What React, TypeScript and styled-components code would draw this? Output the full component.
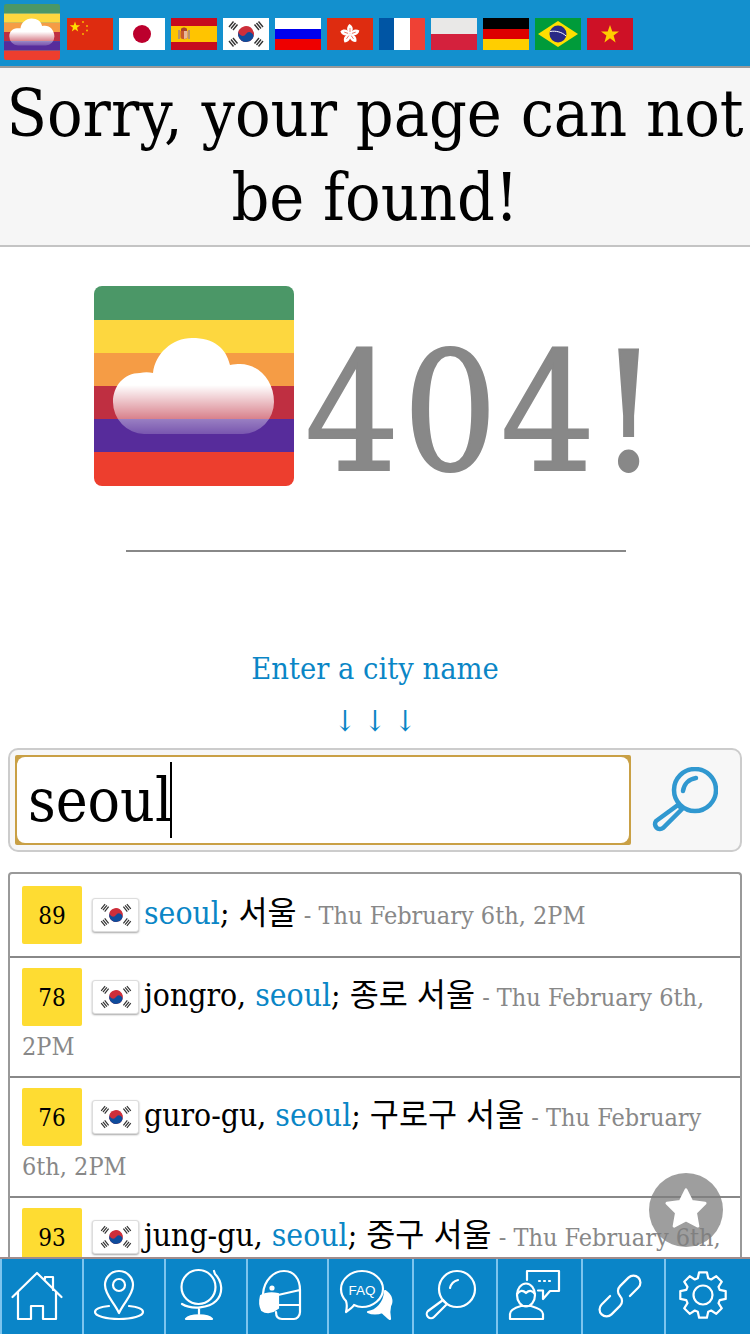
import React from 'react'
import styled, { createGlobalStyle } from 'styled-components'

const SERIF = '"DejaVu Serif Condensed", "DejaVu Serif", "Noto Sans CJK KR", serif'

const GlobalStyle = createGlobalStyle`
    html, body {
        margin: 0;
        padding: 0;
        background: #fff;
    }
    * {
        box-sizing: border-box;
    }
`

// @ Logo: six stripes and the cloud
const Logo = ({ size, id }: { size: number; id: string }) => (
    <svg width={size} height={size} viewBox="0 0 200 200" style={{ display: 'block' }}>
        <defs>
            <linearGradient id={id} x1="0" y1="0" x2="0" y2="1">
                <stop offset="0.49" stopColor="#fff" />
                <stop offset="0.84" stopColor="#fff" stopOpacity="0.4" />
                <stop offset="1" stopColor="#fff" stopOpacity="0.2" />
            </linearGradient>
            <clipPath id={`${id}-clip`}>
                <rect width="200" height="200" rx="8" />
            </clipPath>
        </defs>
        <g clipPath={`url(#${id}-clip)`}>
            <rect y="0" width="200" height="34" fill="#4b9767" />
            <rect y="34" width="200" height="33" fill="#fdd73f" />
            <rect y="67" width="200" height="33" fill="#f59c45" />
            <rect y="100" width="200" height="33" fill="#bf2f41" />
            <rect y="133" width="200" height="33" fill="#572c9b" />
            <rect y="166" width="200" height="34" fill="#ed3e2e" />
        </g>
        <path
            d="M50 148 A32 32 0 0 1 19 116 C19 100 30 87 46 87 C50 86 55 86 59 87 C61 68 78 52 98 52 C120 52 132 62 136 79 C140 78 143 78 146 78 C165 78 180 95 180 116 A32 32 0 0 1 149 148 Z"
            fill={`url(#${id})`}
        />
    </svg>
)

const FlagCn = () => (
    <svg viewBox="0 0 46 32">
        <rect width="46" height="32" fill="#de2c10" />
        <polygon points="8,3.500 9.300,7.300 13.200,7.300 10,9.700 11.200,13.500 8,11.200 4.800,13.500 6,9.700 2.800,7.300 6.700,7.300" fill="#ffde00" />
        <circle cx="16" cy="4" r="1" fill="#f8b400" />
        <circle cx="20" cy="8" r="1" fill="#f8b400" />
        <circle cx="20" cy="12.500" r="1" fill="#f8b400" />
        <circle cx="16" cy="16" r="1" fill="#f8b400" />
    </svg>
)

const FlagJp = () => (
    <svg viewBox="0 0 46 32">
        <rect width="46" height="32" fill="#fff" />
        <circle cx="23" cy="16" r="9" fill="#bc002d" />
    </svg>
)

const FlagEs = () => (
    <svg viewBox="0 0 46 32">
        <rect width="46" height="32" fill="#c60b1e" />
        <rect y="8" width="46" height="16" fill="#ffc400" />
        <rect x="7" y="12" width="2" height="9" fill="#b8936b" />
        <rect x="17" y="12" width="2" height="9" fill="#b8936b" />
        <path d="M9.500 13 H16.500 V19 C16.500 22 9.500 22 9.500 19 Z" fill="#c8582e" />
        <path d="M13 13 H16.500 V19 C16.500 20 15 21 13 21 Z" fill="#e8b89a" />
        <path d="M10 11 C11 9 15 9 16 11 V13 H10 Z" fill="#a8432a" />
    </svg>
)

const FlagKr = () => (
    <svg viewBox="0 0 46 32">
        <rect width="46" height="32" fill="#fff" />
        <g transform="translate(23 16) rotate(34)">
            <circle r="8" fill="#cd2e3a" />
            <path d="M-8 0 A8 8 0 0 0 8 0 A4 4 0 0 0 0 0 A4 4 0 0 1 -8 0 Z" fill="#0f4c9c" />
        </g>
        <g stroke="#333" strokeWidth="1.400">
            <path d="M6 9 L10.500 3.500 M8 10.500 L12.500 5 M10 12 L14.500 6.500" />
            <path d="M31.500 6.500 L36 12 M33.500 5 L38 10.500 M35.500 3.500 L40 9" />
            <path d="M6 23 L10.500 28.500 M8 21.500 L12.500 27 M10 20 L14.500 25.500" />
            <path d="M31.500 25.500 L36 20 M33.500 27 L38 21.500 M35.500 28.500 L40 23" />
        </g>
    </svg>
)

const FlagRu = () => (
    <svg viewBox="0 0 46 32">
        <rect width="46" height="11" fill="#fff" />
        <rect y="11" width="46" height="10" fill="#0000ee" />
        <rect y="21" width="46" height="11" fill="#ee0000" />
    </svg>
)

const FlagHk = () => (
    <svg viewBox="0 0 46 32">
        <rect width="46" height="32" fill="#de2c10" />
        {[0, 72, 144, 216, 288].map((deg) => (
            <g key={deg} transform={`rotate(${deg} 23 16)`}>
                <path d="M23 16 C19 13 19.500 8.500 22.500 6 C26.500 8 27 13 23 16 Z" fill="#fff" />
                <path d="M23 14 L23 10" stroke="#de2c10" strokeWidth="0.600" />
            </g>
        ))}
    </svg>
)

const FlagFr = () => (
    <svg viewBox="0 0 46 32">
        <rect width="15" height="32" fill="#0055a4" />
        <rect x="15" width="16" height="32" fill="#fff" />
        <rect x="31" width="15" height="32" fill="#ef4135" />
    </svg>
)

const FlagPl = () => (
    <svg viewBox="0 0 46 32">
        <rect width="46" height="16" fill="#e9e8e7" />
        <rect y="16" width="46" height="16" fill="#d4213d" />
    </svg>
)

const FlagDe = () => (
    <svg viewBox="0 0 46 32">
        <rect width="46" height="11" fill="#000" />
        <rect y="11" width="46" height="10" fill="#dd0000" />
        <rect y="21" width="46" height="11" fill="#ffce00" />
    </svg>
)

const FlagBr = () => (
    <svg viewBox="0 0 46 32">
        <rect width="46" height="32" fill="#009b3a" />
        <polygon points="23,3 43,16 23,29 3,16" fill="#fedf00" />
        <circle cx="23" cy="16" r="8.500" fill="#2a2a86" />
        <path d="M15 13.500 C21 12.500 27 14 31 18" stroke="#fff" strokeWidth="1" fill="none" />
    </svg>
)

const FlagVn = () => (
    <svg viewBox="0 0 46 32">
        <rect width="46" height="32" fill="#ce1126" />
        <polygon points="23,7 25.300,13.500 32,13.500 26.600,17.600 28.600,24.500 23,20.300 17.400,24.500 19.400,17.600 14,13.500 20.700,13.500" fill="#ffcd00" />
    </svg>
)

// @ Footer icons, all on a 50x50 canvas
const HomeIcon = () => (
    <path d="M0.500 27 L25 3 L49.500 27 M6 22 V49 H19 V36 H31 V49 H44 V22 M33 9 V7 H41 V20" />
)

const PinIcon = () => (
    <>
        <path d="M25 43 C20 32 11 25 11 15 A14 14 0 0 1 39 15 C39 25 30 32 25 43 Z" />
        <circle cx="25" cy="15" r="6" />
        <path d="M15 36 C6 37 1 39 1 42 C1 46 12 49 25 49 C38 49 49 46 49 42 C49 39 44 37 35 36" />
    </>
)

const GlobeIcon = () => (
    <>
        <circle cx="20.500" cy="17" r="17" />
        <path d="M36 1 L37 4 C44 11 46 23 38 31 C31 38 14 40 4 34 M21 38 V44" />
        <path d="M8 49 C12 44 30 44 34 49 Z" fill="#fff" />
    </>
)

const MaskIcon = () => (
    <>
        <path d="M5 24 C6 10 16 1 26 1 C36 1 42 9 42 20 V42 C42 46 39 49 36 49 H24 C20 49 18 47 18 42 M20 25 L42 20 M20 35 H42" />
        <path d="M3 26 C8 23 14 23 20 24 V38 C14 43 8 43 4 40 C2 36 2 30 3 26 Z" fill="#fff" />
        <circle cx="14" cy="18" r="1.500" fill="#fff" />
    </>
)

const FaqIcon = () => (
    <>
        <path d="M44 21 C50 25 52 31 49 36 C48 40 48 45 49 49 C46 47 43 44 41 42 C37 44 31 44 27 42 C35 41 44 33 44 21 Z" fill="#fff" />
        <path d="M21 1 C32 1 42 9 42 19 C42 29 32 37 21 37 C18 37 15 36 13 35 C11 38 8 40 5 42 C6 38 6 34 5 31 C2 28 0 24 0 19 C0 9 10 1 21 1 Z" />
        <FaqLabel x="21" y="25">FAQ</FaqLabel>
    </>
)

const SearchIcon = () => (
    <>
        <circle cx="33" cy="19" r="18" />
        <path d="M19 30 L23 34 L10 47 A4 4 0 0 1 4 41 Z" />
        <path d="M26 18 C27 14 30 11 34 10" />
    </>
)

const AgentIcon = () => (
    <>
        <path d="M19 10 V1 H51 V21 H42 L35 29 V20.500 H30" />
        <ellipse cx="18" cy="25" rx="9" ry="11.500" />
        <path d="M9 24 C12 20 15 20 18 23 C21 20 24 20 27 24" />
        <path d="M2 49 V44 C2 40 6 38 13 36 H23 C30 38 35 40 35 44 V49 Z" />
        <path d="M31 11 H32 M36 11 H37 M41 11 H42" />
    </>
)

const LinkIcon = () => (
    <g transform="rotate(-45 25 26)">
        <path d="M18 19 H6 A7 7 0 0 0 6 33 H18 A7 7 0 0 0 25 26" />
        <path d="M32 33 H44 A7 7 0 0 0 44 19 H32 A7 7 0 0 0 25 26" />
    </g>
)

// @ Compute gear outline (8 teeth)
const gearPath = (() => {
    const pts: string[] = []
    const teeth = 8
    for (let i = 0; i < teeth; i++) {
        const base = (i * Math.PI * 2) / teeth - Math.PI / 2
        const spots: [number, number][] = [
            [17.5, -0.3],
            [23, -0.17],
            [23, 0.17],
            [17.5, 0.3],
        ]
        spots.forEach(([r, a]) => {
            const x = 25 + r * Math.cos(base + a)
            const y = 25 + r * Math.sin(base + a)
            pts.push(`${x.toFixed(1)} ${y.toFixed(1)}`)
        })
    }
    return `M${pts.join(' L')} Z`
})()

const GearIcon = () => (
    <>
        <path d={gearPath} />
        <circle cx="25" cy="25" r="9.500" />
    </>
)

const flags = [FlagCn, FlagJp, FlagEs, FlagKr, FlagRu, FlagHk, FlagFr, FlagPl, FlagDe, FlagBr, FlagVn]

const navItems = [
    { Icon: HomeIcon, width: 82, left: 10 },
    { Icon: PinIcon, width: 82, left: 10 },
    { Icon: GlobeIcon, width: 82, left: 12 },
    { Icon: MaskIcon, width: 81, left: 10 },
    { Icon: FaqIcon, width: 85, left: 12 },
    { Icon: SearchIcon, width: 84, left: 10 },
    { Icon: AgentIcon, width: 85, left: 10 },
    { Icon: LinkIcon, width: 83, left: 12 },
    { Icon: GearIcon, width: 86, left: 12 },
]

type ResultType = {
    score: number
    before?: string
    after: string
    date: string
}

const results: ResultType[] = [
    { score: 89, after: '; 서울', date: 'Thu February 6th, 2PM' },
    { score: 78, before: 'jongro, ', after: '; 종로 서울', date: 'Thu February 6th, 2PM' },
    { score: 76, before: 'guro-gu, ', after: '; 구로구 서울', date: 'Thu February 6th, 2PM' },
    { score: 93, before: 'jung-gu, ', after: '; 중구 서울', date: 'Thu February 6th, 2PM' },
]

const App = () => {
    return (
        <Page>
            <GlobalStyle />
            <Header>
                <LogoSlot>
                    <Logo size={56} id="logo-small" />
                </LogoSlot>
                {flags.map((Flag, idx) => (
                    <FlagBox key={idx}>
                        <Flag />
                    </FlagBox>
                ))}
            </Header>

            <Main>
                <TitleBox>
                    <Title>Sorry, your page can not be found!</Title>
                </TitleBox>

                <ErrorBox>
                    <Logo size={200} id="logo-big" />
                    <ErrorCode>404!</ErrorCode>
                </ErrorBox>
                <Divider />

                <Prompt>Enter a city name</Prompt>
                <Arrows>↓ ↓ ↓</Arrows>

                <SearchBar>
                    <SearchFrame>
                        <SearchField>
                            seoul
                            <Caret />
                        </SearchField>
                    </SearchFrame>
                    <SearchButton>
                        <svg width="66" height="66" viewBox="0 0 66 66" fill="none" stroke="#3098d0" strokeWidth="4.500" strokeLinecap="round">
                            <circle cx="43" cy="23" r="21" />
                            <path d="M26 38 L30 42 L11 61 A5 5 0 0 1 4 54 Z" />
                            <path d="M31 24 C32 17 37 12 44 11" />
                        </svg>
                    </SearchButton>
                </SearchBar>

                <ResultList>
                    {results.map((item) => (
                        <ResultRow key={item.score}>
                            <Score>{item.score}</Score>
                            <RowFlag>
                                <FlagKr />
                            </RowFlag>
                            <City>
                                {item.before}
                                <Match>seoul</Match>
                                {item.after}
                            </City>
                            <DateText> - {item.date}</DateText>
                        </ResultRow>
                    ))}
                </ResultList>
            </Main>

            <Footer>
                {navItems.map(({ Icon, width, left }, idx) => (
                    <NavCell key={idx} $width={width} $left={left}>
                        <NavSvg viewBox="0 0 50 50">
                            <Icon />
                        </NavSvg>
                    </NavCell>
                ))}
            </Footer>

            <FavButton>
                <svg width="44" height="42" viewBox="0 0 46 44">
                    <path
                        d="M23 3 L29 15 L43 17 L33 27 L35.500 41 L23 34.500 L10.500 41 L13 27 L3 17 L17 15 Z"
                        fill="#fff"
                        stroke="#fff"
                        strokeWidth="3"
                        strokeLinejoin="round"
                    />
                </svg>
            </FavButton>
        </Page>
    )
}

export default App

const Page = styled.div`
    position: relative;
    display: flex;
    flex-direction: column;
    height: 1334px;
    overflow: hidden;
    font-family: ${SERIF};
    color: #000;
`

const Header = styled.header`
    flex: none;
    display: flex;
    align-items: flex-start;
    gap: 6px;
    height: 68px;
    padding: 4px 0 0 4px;
    background: #1390ce;
    border-bottom: 2px solid #9a9a9a;
`

const LogoSlot = styled.div`
    flex: none;
    width: 57px;
    height: 56px;
`

const FlagBox = styled.div`
    flex: none;
    width: 46px;
    height: 32px;
    margin-top: 14px;

    svg {
        display: block;
        width: 46px;
        height: 32px;
    }
`

const Main = styled.main`
    flex: 1;
    min-height: 0;
    overflow: hidden;
`

const TitleBox = styled.div`
    padding: 4px 0 5px;
    background: #f6f6f6;
    border-bottom: 2px solid #c4c4c4;
`

const Title = styled.h1`
    margin: 0;
    font-size: 65.8px;
    line-height: 84px;
    font-weight: 400;
    text-align: center;
`

const ErrorBox = styled.div`
    display: flex;
    align-items: center;
    gap: 11px;
    height: 200px;
    margin-top: 39px;
    padding-left: 94px;
`

const ErrorCode = styled.div`
    font-size: 165px;
    letter-spacing: 3.5px;
    line-height: 200px;
    color: #888;
    -webkit-text-stroke: 2px #888;
    transform: translateY(27px);
`

const Divider = styled.div`
    width: 500px;
    height: 2px;
    margin: 64px 0 0 126px;
    background: #888;
`

const Prompt = styled.div`
    margin-top: 97px;
    font-size: 30.5px;
    line-height: 40px;
    color: #0a86c6;
    text-align: center;
`

const Arrows = styled.div`
    margin-top: 12px;
    font-size: 29px;
    line-height: 40px;
    color: #0a86c6;
    text-align: center;
`

const SearchBar = styled.div`
    display: flex;
    align-items: center;
    height: 104px;
    margin: 7px 8px 0;
    padding: 0 5px;
    background: #f7f7f7;
    border: 2px solid #ccc;
    border-radius: 10px;
`

const SearchFrame = styled.div`
    flex: none;
    width: 616px;
    height: 90px;
    padding: 2px;
    background: #c9a045;
    border-radius: 2px;
`

const SearchField = styled.div`
    display: flex;
    align-items: center;
    height: 100%;
    padding: 0 11px;
    font-size: 60px;
    background: #fff;
    border-radius: 8px;
`

const Caret = styled.span`
    display: block;
    width: 2px;
    height: 76px;
    margin-left: -2px;
    background: #000;
`

const SearchButton = styled.div`
    flex: 1;
    display: flex;
    justify-content: center;
    padding-left: 4px;
`

const ResultList = styled.div`
    margin: 20px 8px 0;
    border: 2px solid #999;
    border-bottom: 0;
    border-radius: 4px 4px 0 0;
`

const ResultRow = styled.div`
    padding: 10px 12px 12px;
    font-size: 25px;
    line-height: 34px;
    border-bottom: 2px solid #888;

    &:first-child {
        padding: 12px 12px 8px;
    }

    &:after {
        content: '';
        display: block;
        clear: both;
    }
`

const Score = styled.div`
    float: left;
    width: 60px;
    height: 58px;
    margin-right: 10px;
    font-size: 24px;
    line-height: 60px;
    text-align: center;
    background: #fedc32;
    border-radius: 2px;
`

const RowFlag = styled.span`
    display: inline-block;
    width: 47px;
    height: 34px;
    margin: 12px 5px 16px 0;
    padding: 2px 3px;
    vertical-align: middle;
    background: #fff;
    border: 1px solid #ddd;
    border-radius: 3px;
    box-shadow: 0 1px 2px rgba(0, 0, 0, 0.35);

    svg {
        display: block;
        width: 40px;
        height: 28px;
    }
`

const City = styled.span`
    font-size: 31.6px;
`

const Match = styled.span`
    color: #0a86c6;
`

const DateText = styled.span`
    color: #888;
`

const Footer = styled.footer`
    flex: none;
    display: flex;
    height: 77px;
    background: #0a85c8;
    border-top: 2px solid #a08c8c;
`

const NavCell = styled.div<{ $width: number; $left: number }>`
    flex: none;
    width: ${(p) => p.$width}px;
    padding: 11px 0 0 ${(p) => p.$left}px;
    border-left: 2px solid #7cc4ee;
`

const NavSvg = styled.svg`
    display: block;
    width: 50px;
    height: 50px;
    overflow: visible;
    fill: none;
    stroke: #fff;
    stroke-width: 2.2;
    stroke-linejoin: round;
    stroke-linecap: round;
`

const FaqLabel = styled.text`
    font-family: "Liberation Sans", sans-serif;
    font-size: 13.5px;
    fill: #fff;
    stroke: none;
    text-anchor: middle;
`

const FavButton = styled.div`
    position: absolute;
    right: 27px;
    bottom: 87px;
    display: flex;
    align-items: center;
    justify-content: center;
    width: 74px;
    height: 74px;
    padding-bottom: 5px;
    background: rgba(125, 125, 125, 0.75);
    border-radius: 50%;
`
